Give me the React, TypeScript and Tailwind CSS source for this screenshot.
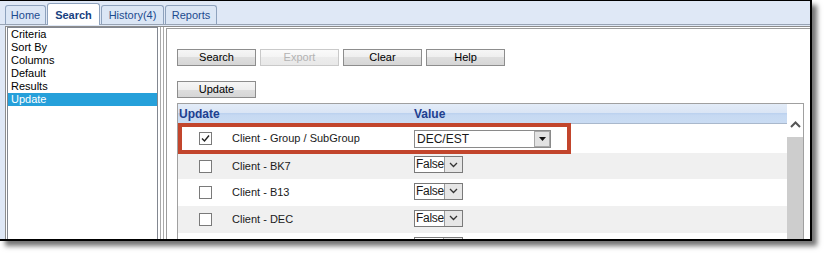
import React from 'react';

const tabs = [
  { label: 'Home', w: 'w-[41px]' },
  { label: 'Search', w: 'w-[53px]', active: true },
  { label: 'History(4)', w: 'w-[63px]' },
  { label: 'Reports', w: 'w-[52px]' },
];

const menu = ['Criteria', 'Sort By', 'Columns', 'Default', 'Results', 'Update'];

const rows = [
  { label: 'Client - Group / SubGroup', checked: true, value: 'DEC/EST', h: 'h-[29px]', bg: 'bg-white' },
  { label: 'Client - BK7', value: 'False', h: 'h-[26px]', bg: 'bg-[#f0f0f0]' },
  { label: 'Client - B13', value: 'False', h: 'h-[27px]', bg: 'bg-white' },
  { label: 'Client - DEC', value: 'False', h: 'h-[27px]', bg: 'bg-[#f0f0f0]' },
  // next row is cut off by the frame, only the top of its select shows
  { label: '', value: '', h: 'h-[27px]', bg: 'bg-white' },
];

const Btn = ({ label, disabled }: { label: string; disabled?: boolean }) => (
  <div
    className={
      disabled
        ? 'h-[17px] w-[79px] flex items-center justify-center border border-[#c9c9c9] bg-[linear-gradient(#fafafa_0%,#f4f4f4_50%,#ececec_50%,#e8e8e8_100%)] text-[#b3b3b3]'
        : 'h-[17px] w-[79px] flex items-center justify-center border border-[#8d8d8d] bg-[linear-gradient(#f6f6f6_0%,#eeeeee_50%,#dedede_50%,#d6d6d6_100%)] text-black'
    }
  >
    {label}
  </div>
);

const Checkbox = ({ checked }: { checked?: boolean }) => (
  <div className="w-[13px] h-[13px] border border-[#7a7a7a] bg-white flex items-center justify-center">
    {checked && (
      <svg width="11" height="11" viewBox="0 0 11 11">
        <path d="M2 5.5 L4.5 8 L9 2.5" fill="none" stroke="#222" strokeWidth="1.4" />
      </svg>
    )}
  </div>
);

const SmallSelect = ({ value }: { value: string }) => (
  <div className="mb-[3px] h-[17px] w-[49px] flex border border-[#7a7a7a] bg-white">
    <div className="flex-1 pl-[1px] leading-[14px] text-[12px] tracking-[-0.3px]">{value}</div>
    <div className="w-[19px] border-l border-[#9a9a9a] bg-[#e6e6e6] flex items-center justify-center">
      <svg width="9" height="6" viewBox="0 0 9 6">
        <path d="M1 1 L4.5 4.5 L8 1" fill="none" stroke="#333" strokeWidth="1.3" />
      </svg>
    </div>
  </div>
);

const WideSelect = ({ value }: { value: string }) => (
  <div className="h-[18px] w-[137px] flex border border-[#8a8a8a] bg-white">
    <div className="flex-1 pl-[2px] leading-[16px] text-[12px]">{value}</div>
    <div className="w-[16px] border border-[#a8a8a8] bg-[#e2e2e2] flex items-center justify-center">
      <svg width="7" height="4" viewBox="0 0 7 4">
        <path d="M0 0 L7 0 L3.5 4 Z" fill="#111" />
      </svg>
    </div>
  </div>
);

export default function App() {
  return (
    <div className="w-[827px] h-[255px] bg-white font-['Liberation_Sans',Arial,sans-serif] text-[11px] text-black">
      <div className="w-[812px] h-[241px] border-t border-r-2 border-b-2 border-black bg-[#dfe8f6] shadow-[5px_5px_5px_rgba(0,0,0,0.55)] flex flex-col overflow-hidden">
        {/* tab strip */}
        <div className="h-[24px] shrink-0 flex items-end gap-px pl-[5px] border-b border-[#98a3b3]">
          {tabs.map((t) =>
            t.active ? (
              <div
                key={t.label}
                className={`${t.w} relative -mb-px h-[22px] rounded-t-[3px] border border-b-0 border-[#8ea2bd] bg-white flex items-center justify-center pt-[1px] font-bold text-[#173f80]`}
              >
                {t.label}
              </div>
            ) : (
              <div
                key={t.label}
                className={`${t.w} h-[19px] rounded-t-[3px] border border-b-0 border-[#8ea2bd] bg-[#dbe6f5] flex items-center justify-center text-[#1d4b8f]`}
              >
                {t.label}
              </div>
            )
          )}
        </div>

        {/* body */}
        <div className="flex-1 min-h-0 flex pl-[5px] pt-[1px]">
          <div className="flex-1 flex border-l border-t border-[#8c8c8c] bg-white pl-px">
            {/* left menu */}
            <div className="w-[151px] border-l border-t border-r border-[#828790] bg-white">
              {menu.map((m) => (
                <div
                  key={m}
                  className={
                    m === 'Update'
                      ? 'h-[13px] leading-[13px] pl-[3px] bg-[#26a0da] text-white'
                      : 'h-[13px] leading-[13px] pl-[3px]'
                  }
                >
                  {m}
                </div>
              ))}
            </div>

            {/* splitter */}
            <div className="w-[7px] flex">
              <div className="w-[2px]" />
              <div className="w-px bg-[#a9a9a9]" />
              <div className="w-[2px]" />
              <div className="w-px bg-[#a9a9a9]" />
            </div>

            {/* right panel */}
            <div className="flex-1 min-w-0 mt-px ml-px border-l border-t border-[#9c9c9c] bg-white flex flex-col pt-[20px] pl-[10px] pr-[6px]">
              <div className="flex gap-[4px]">
                <Btn label="Search" />
                <Btn label="Export" disabled />
                <Btn label="Clear" />
                <Btn label="Help" />
              </div>
              <div className="mt-[15px] flex">
                <Btn label="Update" />
              </div>

              {/* grid */}
              <div className="mt-[5px] flex-1 min-h-0 flex border-l border-t border-r border-[#a0a0a0]">
                <div className="relative flex-1 min-w-0">
                  <div className="h-[20px] border-b border-[#a9b8cc] bg-[linear-gradient(#e3ecf8_0%,#dae5f5_45%,#bcd2ef_50%,#c6d9f2_60%,#cadcf3_100%)] grid grid-cols-[236px_1fr] items-center font-bold text-[12px] text-[#1e3f8f]">
                    <div className="pl-[1px]">Update</div>
                    <div>Value</div>
                  </div>
                  {rows.map((r, i) => (
                    <div key={i} className={`${r.h} ${r.bg} grid grid-cols-[54px_182px_1fr] items-center text-[11px] text-[#1a1a1a]`}>
                      <div className="flex justify-center">{r.label && <Checkbox checked={r.checked} />}</div>
                      <div>{r.label}</div>
                      <div>{r.value === 'DEC/EST' ? <WideSelect value={r.value} /> : <SmallSelect value={r.value} />}</div>
                    </div>
                  ))}
                  {/* highlight annotation */}
                  <div className="absolute left-0 top-[19px] w-[393px] h-[31px] border-[4px] border-[#c2452c]" />
                </div>

                {/* scrollbar */}
                <div className="w-[16px] flex flex-col bg-white">
                  <div className="h-[33px] pt-[17px] flex justify-center">
                    <svg width="11" height="7" viewBox="0 0 11 7">
                      <path d="M1 6 L5.5 1.5 L10 6" fill="none" stroke="#555" strokeWidth="2" />
                    </svg>
                  </div>
                  <div className="flex-1 bg-[#cdcdcd]" />
                </div>
              </div>
            </div>
          </div>
        </div>
      </div>
    </div>
  );
}
